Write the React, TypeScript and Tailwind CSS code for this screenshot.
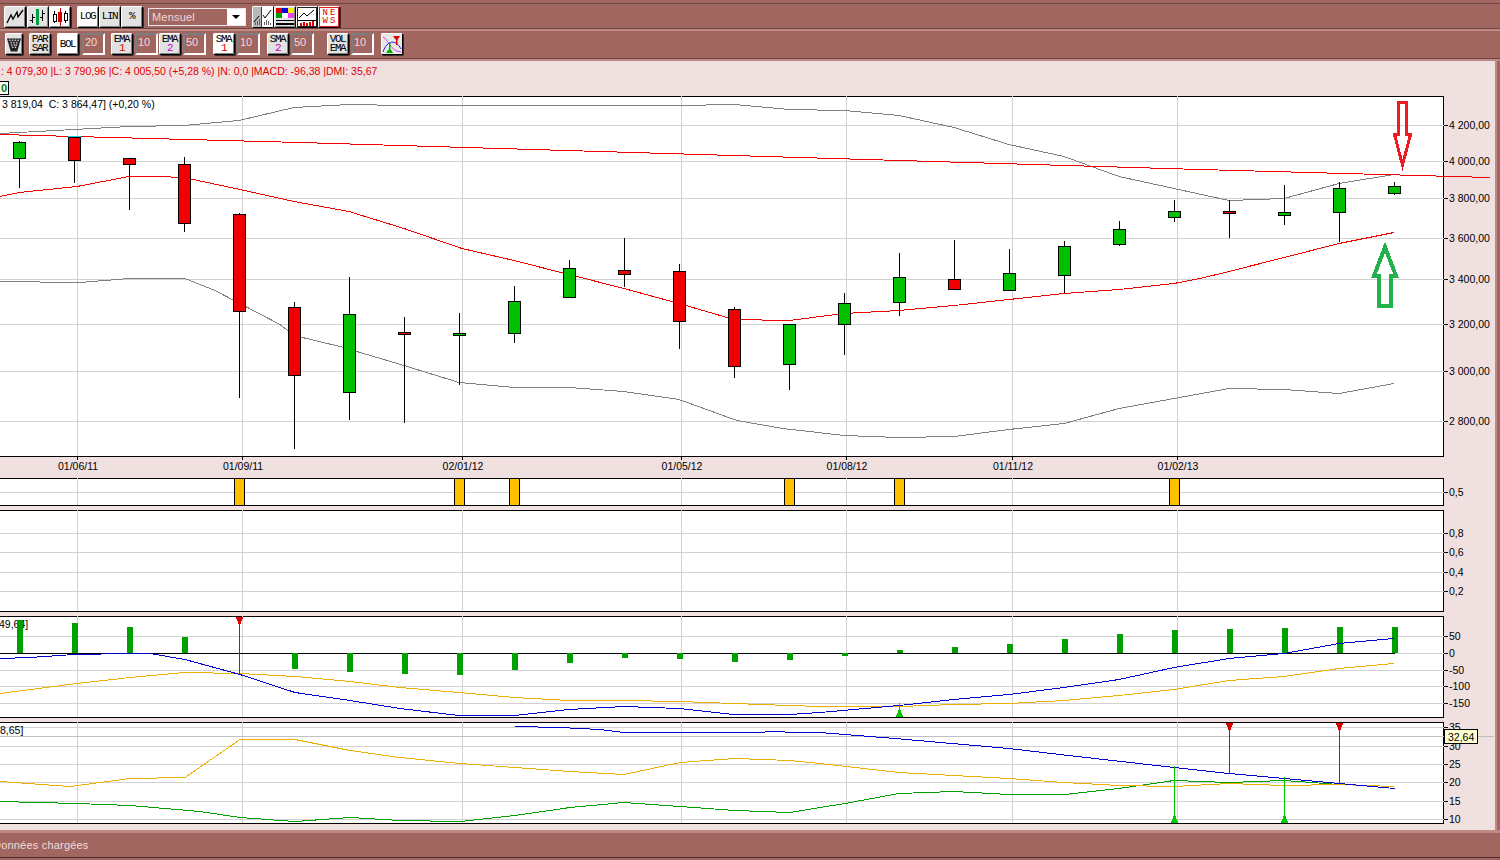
import React from "react";

const FONT = { fontFamily: '"Liberation Sans", Arial, sans-serif' };
const MONO = { fontFamily: '"Liberation Mono", "Courier New", monospace' };

const VX = [77, 242, 462, 681, 846, 1012, 1177];
const GRID = "#d2d2d2";

type C = [number, number, number, number, number, "g" | "r"];
const CANDLES: C[] = [
  [19, 141, 188, 142, 158, "g"],
  [74, 137, 183, 137, 160, "r"],
  [129, 158, 210, 158, 164, "r"],
  [184, 157, 232, 164, 223, "r"],
  [239, 213, 398, 214, 311, "r"],
  [294, 302, 449, 307, 375, "r"],
  [349, 277, 420, 314, 392, "g"],
  [404, 317, 423, 332, 334, "r"],
  [459, 313, 385, 333, 335, "g"],
  [514, 286, 343, 301, 333, "g"],
  [569, 260, 298, 268, 297, "g"],
  [624, 238, 287, 270, 274, "r"],
  [679, 264, 349, 271, 321, "r"],
  [734, 307, 378, 309, 366, "r"],
  [789, 324, 390, 324, 364, "g"],
  [844, 293, 355, 303, 324, "g"],
  [899, 253, 316, 277, 302, "g"],
  [954, 240, 289, 279, 289, "r"],
  [1009, 249, 290, 273, 290, "g"],
  [1064, 241, 293, 246, 275, "g"],
  [1119, 221, 246, 229, 244, "g"],
  [1174, 200, 222, 211, 217, "g"],
  [1229, 200, 238, 211, 213, "r"],
  [1284, 185, 225, 212, 215, "g"],
  [1339, 182, 242, 188, 212, "g"],
  [1394, 182, 195, 186, 193, "g"],
];

const UPPER = "0,133 74,129 129,126 184,125 239,120 294,107 349,104 404,105 459,105 514,105 569,105 624,105 679,105 734,104 789,109 844,110 899,115 954,127 1009,144 1064,156 1119,176 1174,188 1229,200 1284,198 1339,183 1394,174";
const LONG = "0,134 300,142 600,151 900,160 1200,169 1490,177";
const MID = "0,196 19,192 77,186 129,176 157,176 184,177 240,189 294,201 349,211 404,228 462,248 514,260 569,274 624,288 679,303 734,319 789,320 844,313 899,310 954,305 1009,299 1064,293 1119,289 1174,283 1200,278 1229,271 1284,257 1339,243 1394,232";
const LOWER = "0,281 80,282 129,278 185,278 215,290 280,324 294,335 340,346 404,365 459,382 514,387 569,387 624,391 679,399 737,420 783,428 844,435 899,437 954,436 1009,429 1064,423 1119,408 1174,398 1229,388 1284,389 1339,393 1394,383";

const MACD_BARS: [number, number, number][] = [
  [19, 620, 653], [74, 623, 653], [129, 627, 653], [184, 637, 653],
  [294, 653, 669], [349, 653, 672], [404, 653, 674], [459, 653, 675], [514, 653, 670],
  [569, 653, 663], [624, 653, 658], [679, 653, 659], [734, 653, 662], [789, 653, 660],
  [844, 653, 656], [899, 650, 653], [954, 647, 653], [1009, 644, 653], [1064, 639, 653],
  [1119, 634, 653], [1174, 630, 653], [1229, 629, 653], [1284, 628, 653], [1339, 627, 653], [1394, 627, 653],
];
const MACD = "0,658 30,657 74,654 130,653 150,653 185,659 240,674 295,692 350,700 400,708 459,715 514,715 569,709 624,706 679,708 734,714 789,714 820,712 899,705 954,699 1009,694 1064,687 1119,679 1174,667 1229,658 1284,653 1339,643 1394,638";
const SIGNAL = "0,693 77,683 130,677 185,672 240,673 295,676 350,681 400,687 459,692 514,697 569,700 624,700 679,701 734,703 789,705 820,706 899,706 954,704 1009,703 1064,700 1119,695 1174,689 1229,680 1284,676 1339,668 1394,663";
const DMI_BLUE = "515,726 560,727 600,729 624,732 760,732 770,731 800,732 820,732 895,738 1009,748 1060,754 1174,767 1229,773 1284,778 1339,783 1395,788";
const DMI_YEL = "0,781 70,786 130,778 185,777 240,739 295,739 350,750 400,757 460,763 515,767 570,771 624,774 680,762 735,758 790,760 820,763 899,772 954,775 1009,778 1064,782 1119,785 1174,786 1229,783 1284,785 1339,784 1394,786";
const DMI_GRN = "0,801 77,803 130,805 200,811 240,817 295,821 350,817 400,820 460,821 515,815 570,807 624,802 680,806 735,810 790,812 820,807 845,803 899,793 954,791 1009,794 1064,794 1119,788 1174,780 1229,782 1284,780 1339,784";

function Line({ p, c }: { p: string; c: string }) {
  return <polyline points={p} transform="translate(0 0.5)" fill="none" stroke={c} strokeWidth={1} shapeRendering="crispEdges" />;
}

function Grid({ y0, y1, ys }: { y0: number; y1: number; ys: number[] }) {
  return (
    <g shapeRendering="crispEdges">
      {ys.map((y) => (
        <line key={y} x1={0} x2={1444} y1={y + 0.5} y2={y + 0.5} stroke={GRID} />
      ))}
      {VX.map((x) => (
        <line key={x} x1={x + 0.5} x2={x + 0.5} y1={y0} y2={y1} stroke={GRID} />
      ))}
    </g>
  );
}

function Down({ x, y0, y1 }: { x: number; y0: number; y1: number }) {
  return (
    <g shapeRendering="crispEdges">
      <line x1={x + 0.5} x2={x + 0.5} y1={y0} y2={y1} stroke="#e00000" />
      <polygon points={`${x - 3},${y0} ${x + 4},${y0} ${x + 4},${y0 + 2} ${x + 3},${y0 + 2} ${x + 3},${y0 + 4} ${x + 2},${y0 + 4} ${x + 2},${y0 + 7} ${x - 1},${y0 + 7} ${x - 1},${y0 + 4} ${x - 2},${y0 + 4} ${x - 2},${y0 + 2} ${x - 3},${y0 + 2}`} fill="#e00000" />
    </g>
  );
}
function Up({ x, y0, y1 }: { x: number; y0: number; y1: number }) {
  return (
    <g shapeRendering="crispEdges">
      <line x1={x + 0.5} x2={x + 0.5} y1={y0} y2={y1} stroke="#00c800" />
      <polygon points={`${x - 3},${y1} ${x + 4},${y1} ${x + 4},${y1 - 2} ${x + 3},${y1 - 2} ${x + 3},${y1 - 4} ${x + 2},${y1 - 4} ${x + 2},${y1 - 7} ${x - 1},${y1 - 7} ${x - 1},${y1 - 4} ${x - 2},${y1 - 4} ${x - 2},${y1 - 2} ${x - 3},${y1 - 2}`} fill="#00c800" />
    </g>
  );
}

function Axis({ items }: { items: [string, number][] }) {
  return (
    <g>
      {items.map(([t, y]) => (
        <g key={t}>
          <line x1={1444} x2={1448} y1={y + 0.5} y2={y + 0.5} stroke="#000" shapeRendering="crispEdges" />
          <text x={1449} y={y + 4} fontSize={10.5} fill="#000" style={FONT}>{t}</text>
        </g>
      ))}
    </g>
  );
}

function Panel({ top, bottom, children }: { top: number; bottom: number; children: React.ReactNode }) {
  const h = bottom - top + 1;
  return (
    <div className="relative w-[1444px] shrink-0 bg-white border-y border-r border-black" style={{ height: h }}>
      <svg className="absolute left-0 top-[-1px] overflow-visible" width={1495} height={h} viewBox={`0 ${top} 1495 ${h}`}>
        {children}
      </svg>
    </div>
  );
}

const BTN = "h-[22px] shrink-0 flex items-center justify-center rounded-[2px] border border-t-white border-l-white border-r-black border-b-black shadow-[inset_-1px_-1px_0_#808080,1px_1px_0_#3a2a2a]";
const W22 = " w-[22px]";
const GRAY = " bg-[#e2e2e2]";
const WHITE = " bg-white";

function TextBtn({ a, b, on, cb }: { a: string; b?: string; on?: boolean; cb?: string }) {
  return (
    <div className={BTN + W22 + (on ? WHITE : GRAY) + " flex-col text-black text-[11px] leading-[9px] tracking-[-1.4px] pr-[1px]"} style={MONO}>
      <span>{a}</span>
      {b && <span className={cb ?? ""}>{b}</span>}
    </div>
  );
}

function NumBox({ v }: { v: string }) {
  return (
    <div className="h-[22px] w-[23px] shrink-0 border-2 border-t-[#7d7d7d] border-l-[#7d7d7d] border-r-white border-b-white bg-[#a1665f] text-[#f0d8d8] text-[11px] leading-[15px] pl-[1px]" style={FONT}>
      {v}
    </div>
  );
}

function IcoLine() {
  return <svg width="18" height="15" viewBox="0 0 18 15"><path d="M1 14 L5 6 L7 10 L11 3 L12 8 L17 1" fill="none" stroke="#000" strokeWidth="1.3" /></svg>;
}
function IcoBars() {
  return (
    <svg width="18" height="18" viewBox="0 0 18 18" shapeRendering="crispEdges">
      <path d="M3.5 6V15M1 12H3.5M3.5 9H6M13.5 2V13M11 9H13.5M13.5 5H16" stroke="#000" fill="none" />
      <rect x="7" y="1" width="3" height="16" fill="#00a040" />
    </svg>
  );
}
function IcoCandles() {
  return (
    <svg width="18" height="18" viewBox="0 0 18 18" shapeRendering="crispEdges">
      <path d="M3.5 3V15M14.5 3V15" stroke="#000" />
      <rect x="2" y="6" width="3" height="7" fill="#fff" stroke="#000" />
      <rect x="13" y="5" width="3" height="7" fill="#fff" stroke="#000" />
      <path d="M9 0V18" stroke="#d00000" />
      <rect x="7.5" y="4" width="3" height="9" fill="#e00000" stroke="#d00000" />
    </svg>
  );
}
function IcoSetup() {
  return (
    <svg width="20" height="20" viewBox="0 0 20 20" shapeRendering="crispEdges">
      <rect x="0" y="0" width="9" height="20" fill="#b8b8b8" />
      <rect x="9" y="0" width="11" height="20" fill="#fff" />
      <path d="M8.5 0V20" stroke="#d00000" />
      <path d="M1 15 L6 9 M10 8 L12 11 L18 3" stroke="#000" fill="none" shapeRendering="auto" />
      <path d="M2 18V15M4 18V14M6 18V12M11 18V15M13 18V13M15 18V14M17 18V16" stroke="#666" />
    </svg>
  );
}
function IcoColors() {
  return (
    <svg width="20" height="20" viewBox="0 0 20 20" shapeRendering="crispEdges">
      <rect x="1" y="1" width="6" height="5" fill="#e00000" />
      <rect x="7" y="1" width="6" height="5" fill="#0000e0" />
      <rect x="13" y="1" width="6" height="5" fill="#f0f000" />
      <rect x="1" y="6" width="6" height="5" fill="#00a000" />
      <rect x="7" y="6" width="6" height="5" fill="#ffffff" />
      <rect x="13" y="6" width="6" height="5" fill="#f040f0" />
      <rect x="1" y="13" width="18" height="1" fill="#000" />
      <rect x="1" y="16" width="18" height="2" fill="#000" />
    </svg>
  );
}
function IcoGraph() {
  return (
    <svg width="20" height="20" viewBox="0 0 20 20" shapeRendering="crispEdges">
      <rect x="0.5" y="0.5" width="19" height="19" fill="#fff" stroke="#222" />
      <path d="M2 11 L7 6 L10 9 L17 3" stroke="#000" fill="none" shapeRendering="auto" />
      <rect x="1" y="13" width="18" height="1" fill="#000" />
      <path d="M3.5 19V16M6.5 19V15M9.5 19V16M12.5 19V15M15.5 19V14" stroke="#e00000" strokeWidth="2" />
    </svg>
  );
}
function IcoTrash() {
  return (
    <svg width="14" height="15" viewBox="0 0 15 15">
      <path d="M0 1 H15 L11 15 H4 Z" fill="#222" />
      <g fill="#c8c8c8">
        {[[3, 3], [6, 3], [9, 3], [12, 3], [4.5, 5.5], [7.5, 5.5], [10.5, 5.5], [5, 8], [8, 8], [10, 8], [6, 10.5], [9, 10.5]].map(([x, y]) => (
          <rect key={`${x}-${y}`} x={x - 0.8} y={y - 0.8} width="1.6" height="1.6" />
        ))}
      </g>
    </svg>
  );
}
function IcoCross() {
  return (
    <svg width="20" height="20" viewBox="0 0 20 20">
      <rect width="20" height="20" fill="#e8e8e8" />
      <path d="M1 3 C6 5 8 17 19 18" fill="none" stroke="#e040e0" strokeWidth="1" />
      <path d="M1 18 C5 6 14 5 19 15" fill="none" stroke="#2020e0" strokeWidth="1" />
      <path d="M11 2 H18 L15.5 6 V11 H14 V6 Z" fill="#e00000" />
      <path d="M4 19 H11 L8.5 15 V9 H7 V15 Z" fill="#00b000" />
    </svg>
  );
}

function Bevel() {
  return <div className="h-[3px] shrink-0 bg-[#c08a84] border-t border-[#6f4640]" />;
}

export default function App() {
  const dateLabels: [string, number][] = [["01/06/11", 78], ["01/09/11", 243], ["02/01/12", 463], ["01/05/12", 682], ["01/08/12", 847], ["01/11/12", 1013], ["01/02/13", 1178]];
  return (
    <div className="w-[1500px] h-[860px] overflow-hidden flex flex-col bg-[#f0e0e0]" style={FONT}>
      <header className="h-[61px] shrink-0 flex flex-col bg-[#a1665f]">
        <div className="h-[4px] shrink-0 border-b border-[#6f4640]" />
        <div className="h-[24px] shrink-0 flex items-center pl-[4px] pt-[1px]">
          <div className={BTN + W22 + GRAY}><IcoLine /></div>
          <div className={BTN + W22 + GRAY + " ml-[1px]"}><IcoBars /></div>
          <div className={BTN + W22 + WHITE}><IcoCandles /></div>
          <div className="ml-[6px]"><TextBtn a="LOG" on /></div>
          <TextBtn a="LIN" />
          <TextBtn a="%" />
          <div className="ml-[5px] w-[98px] h-[18px] flex border border-[#e8e8e8] text-[11px] leading-[16px] text-[#f0d8d8]">
            <span className="flex-1 pl-[3px] tracking-[0.2px]">Mensuel</span>
            <span className="w-[18px] bg-white flex items-center justify-center">
              <span className="w-0 h-0 border-x-[4px] border-x-transparent border-t-[4px] border-t-black" />
            </span>
          </div>
          <div className={BTN + W22 + GRAY + " ml-[6px]"}><IcoSetup /></div>
          <div className={BTN + W22 + GRAY}><IcoColors /></div>
          <div className={BTN + W22 + WHITE}><IcoGraph /></div>
          <div className={BTN + W22 + WHITE}>
            <div className="w-[20px] h-[20px] border border-[#e02020] flex flex-col items-center justify-center text-[#e00000] text-[9px] leading-[8px] tracking-[2px] pl-[2px]" style={MONO}>
              <span>NE</span>
              <span>WS</span>
            </div>
          </div>
        </div>
        <Bevel />
        <div className="h-[27px] shrink-0 flex items-center pl-[5px] pb-[1px]">
          <div className={BTN + " w-[18px]" + GRAY}><IcoTrash /></div>
          <div className="ml-[6px]"><TextBtn a="PAR" b="SAR" /></div>
          <div className="ml-[6px]"><TextBtn a="BOL" on /></div>
          <div className="ml-[3px]"><NumBox v="20" /></div>
          <div className="ml-[6px]"><TextBtn a="EMA" b="1" cb="text-[#e00000]" /></div>
          <div className="ml-[2px]"><NumBox v="10" /></div>
          <div className="ml-[1px]"><TextBtn a="EMA" b="2" cb="text-[#c000c0]" /></div>
          <div className="ml-[2px]"><NumBox v="50" /></div>
          <div className="ml-[7px]"><TextBtn a="SMA" b="1" on cb="text-[#e00000]" /></div>
          <div className="ml-[2px]"><NumBox v="10" /></div>
          <div className="ml-[7px]"><TextBtn a="SMA" b="2" cb="text-[#c000c0]" /></div>
          <div className="ml-[2px]"><NumBox v="50" /></div>
          <div className="ml-[13px]"><TextBtn a="VOL" b="EMA" /></div>
          <div className="ml-[2px]"><NumBox v="10" /></div>
          <div className={BTN + W22 + GRAY + " ml-[7px]"}><IcoCross /></div>
        </div>
        <Bevel />
      </header>

      <div className="flex-1 min-h-0 flex">
        <main className="w-[1495px] shrink-0 flex flex-col">
          <div className="h-[20px] shrink-0 pt-[3px] pl-[1px] text-[10.5px] leading-[14px] text-[#e00000] whitespace-nowrap">: 4 079,30 |L: 3 790,96 |C: 4 005,50 (+5,28 %) |N: 0,0 |MACD: -96,38 |DMI: 35,67</div>
          <div className="h-[14px] w-[9px] shrink-0 bg-white border border-black border-l-0 text-[11px] leading-[12px] font-bold text-[#008000] text-right pr-[1px] overflow-hidden mb-[1px]">0</div>

          <Panel top={96} bottom={456}>
            <Grid y0={96} y1={456} ys={[125, 161, 198, 238, 279, 324, 371, 421]} />
            <Line p={UPPER} c="#808080" />
            <Line p={LOWER} c="#808080" />
            <Line p={MID} c="#f00000" />
            <Line p={LONG} c="#f00000" />
            <g shapeRendering="crispEdges">
              {CANDLES.map(([c, wt, wb, t, b, k]) => (
                <g key={c}>
                  <line x1={c + 0.5} x2={c + 0.5} y1={wt} y2={wb} stroke="#000" />
                  <rect x={c - 5.5} y={t + 0.5} width={12} height={b - t} fill={k === "g" ? "#00c000" : "#f00000"} stroke="#000" />
                </g>
              ))}
              <line x1={68} x2={81} y1={136.5} y2={136.5} stroke="#20d0d8" />
            </g>
            <text x={2} y={108} fontSize={10.5} fill="#000" style={FONT}>{"3 819,04\u00A0\u00A0C: 3 864,47] (+0,20 %)"}</text>
            <g fill="none" shapeRendering="crispEdges">
              <path d="M1398.5 102.5 H1406.5 V134.5 H1410.5 L1402.5 165 L1394.5 134.5 H1398.5 Z" stroke="#ed1c24" strokeWidth={3} />
              <path d="M1379 306 H1391 V276 H1396 L1385 247 L1374 276 H1379 Z" stroke="#22b14c" strokeWidth={4} />
            </g>
            <Axis items={[["4 200,00", 125], ["4 000,00", 161], ["3 800,00", 198], ["3 600,00", 238], ["3 400,00", 279], ["3 200,00", 324], ["3 000,00", 371], ["2 800,00", 421]]} />
            {dateLabels.map(([t, x]) => (
              <g key={t}>
                <line x1={x - 0.5} x2={x - 0.5} y1={457} y2={460} stroke="#000" shapeRendering="crispEdges" />
                <text x={x} y={470} textAnchor="middle" fontSize={10.5} fill="#000" style={FONT}>{t}</text>
              </g>
            ))}
          </Panel>

          <div className="h-[21px] shrink-0" />

          <Panel top={478} bottom={505}>
            <Grid y0={478} y1={505} ys={[492]} />
            <g shapeRendering="crispEdges">
              {[239, 459, 514, 789, 899, 1174].map((x) => (
                <rect key={x} x={x - 4.5} y={478.5} width={10} height={27} fill="#ffc000" stroke="#000" />
              ))}
            </g>
            <Axis items={[["0,5", 492]]} />
          </Panel>

          <div className="h-[4px] shrink-0" />

          <Panel top={510} bottom={611}>
            <Grid y0={510} y1={611} ys={[533, 552, 572, 591]} />
            <Axis items={[["0,8", 533], ["0,6", 552], ["0,4", 572], ["0,2", 591]]} />
          </Panel>

          <div className="h-[4px] shrink-0" />

          <Panel top={616} bottom={717}>
            <Grid y0={616} y1={717} ys={[636, 670, 686, 703]} />
            <g shapeRendering="crispEdges">
              <line x1={1395} x2={1444} y1={653.5} y2={653.5} stroke={GRID} />
              <line x1={0} x2={1395} y1={653.5} y2={653.5} stroke="#000" />
            </g>
            <text x={-1} y={628} fontSize={10.5} fill="#000" style={FONT}>49,64]</text>
            <g shapeRendering="crispEdges">
              {MACD_BARS.map(([c, t, b]) => (
                <rect key={c} x={c - 2} y={t} width={6} height={b - t} fill="#00a000" />
              ))}
            </g>
            <Line p={SIGNAL} c="#f0b000" />
            <Line p={MACD} c="#0000d0" />
            <Down x={239} y0={617} y1={674} />
            <Up x={899} y0={703} y1={717} />
            <Axis items={[["50", 636], ["0", 653], ["-50", 670], ["-100", 686], ["-150", 703]]} />
          </Panel>

          <div className="h-[4px] shrink-0" />

          <Panel top={722} bottom={823}>
            <Grid y0={722} y1={823} ys={[727, 746, 764, 782, 801, 819]} />
            <line x1={0} x2={1494} y1={736.5} y2={736.5} stroke="#c0c0c0" shapeRendering="crispEdges" />
            <text x={0} y={734} fontSize={10.5} fill="#000" style={FONT}>8,65]</text>
            <Line p={DMI_GRN} c="#00a000" />
            <Line p={DMI_YEL} c="#f0b000" />
            <Line p={DMI_BLUE} c="#0000d0" />
            <Down x={1229} y0={723} y1={773} />
            <Down x={1339} y0={723} y1={783} />
            <Up x={1174} y0={766} y1={823} />
            <Up x={1284} y0={777} y1={823} />
            <Axis items={[["35", 727], ["30", 746], ["25", 764], ["20", 782], ["15", 801], ["10", 819]]} />
            <g>
              <rect x={1444.5} y={729.5} width={33} height={14} fill="#ffffd0" stroke="#000" shapeRendering="crispEdges" />
              <text x={1448} y={741} fontSize={10.5} fill="#000" style={FONT}>32,64</text>
            </g>
          </Panel>
        </main>
        <div className="w-[5px] shrink-0 bg-[#a1665f] border-l-2 border-[#c08a84]" />
      </div>

      <footer className="h-[30px] shrink-0 flex flex-col bg-[#a1665f]">
        <div className="h-[3px] shrink-0 bg-[#c08a84]" />
        <div className="h-[25px] shrink-0 text-[#f0dcdc] text-[11px] leading-[24px] tracking-[0.2px] border-b border-[#4a2e2a] whitespace-nowrap overflow-hidden">
          <span className="block ml-[-7px]">Données chargées</span>
        </div>
      </footer>
    </div>
  );
}
